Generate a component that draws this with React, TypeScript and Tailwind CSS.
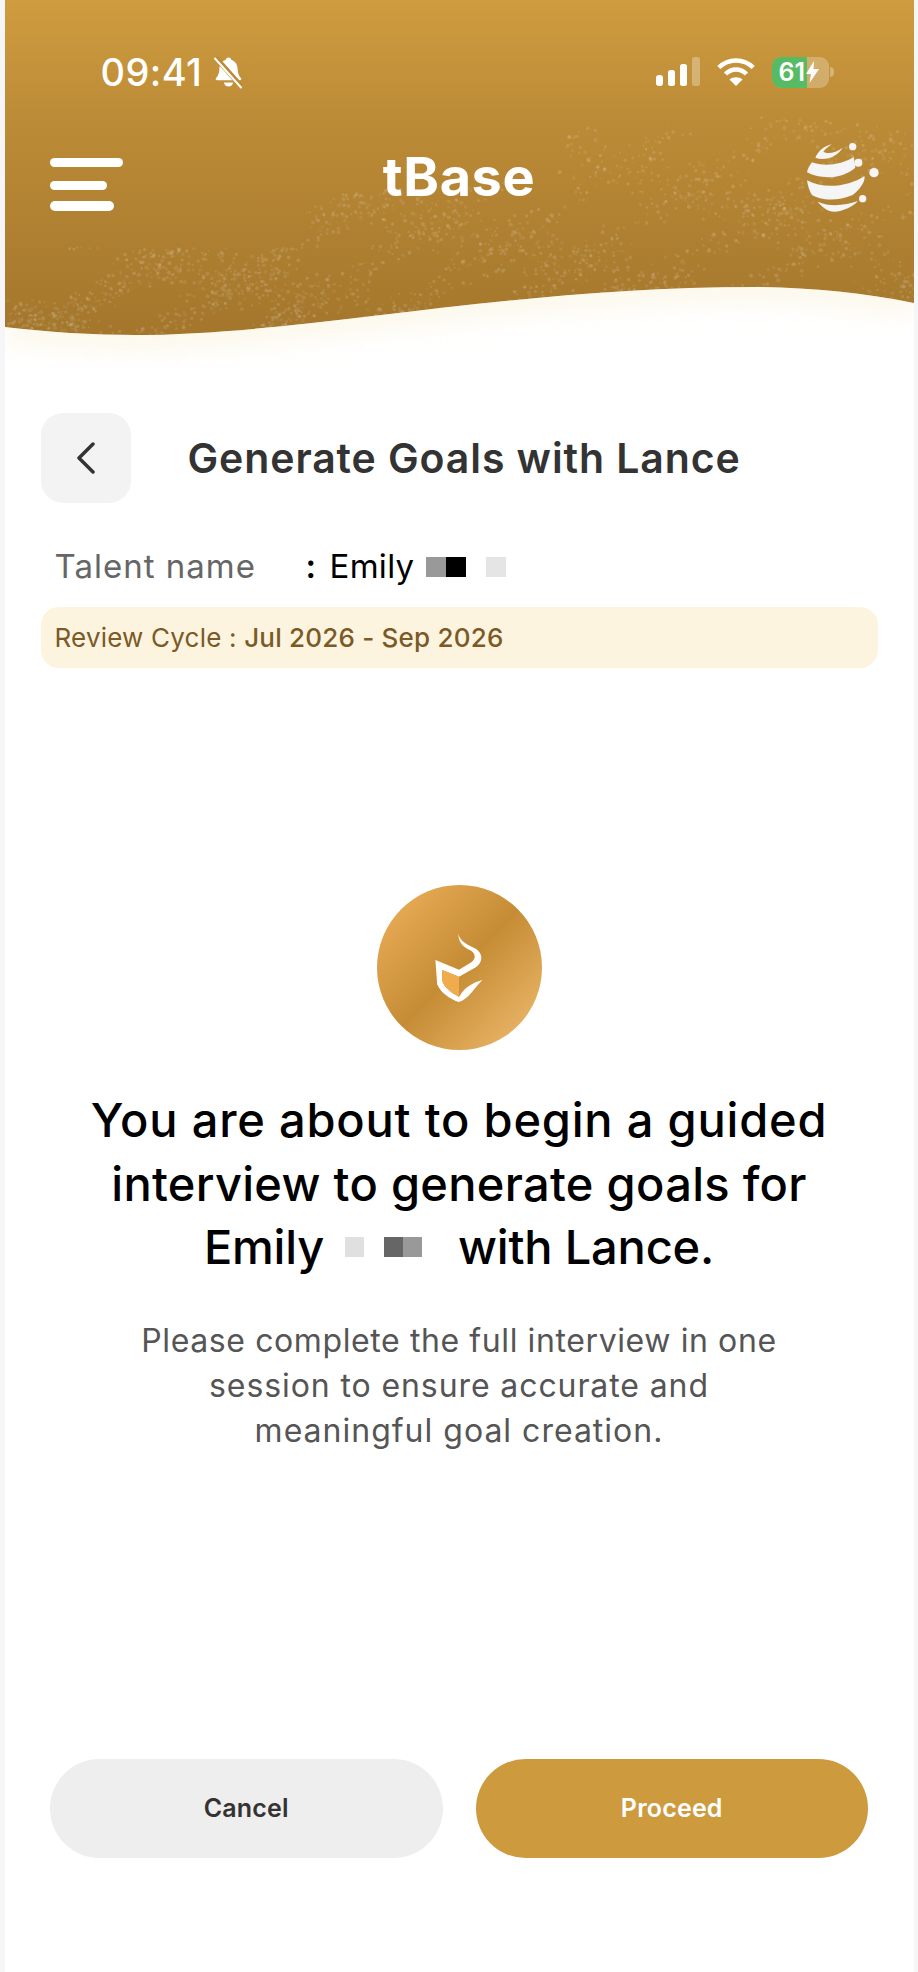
import { useMemo } from 'react'

const WAVE = 'M0 327 C40 332 90 335 130 335 C300 335 500 287 750 287 C800 287 860 293 909 303'

// wave height at a given x, sampled off the curve above
function waveY(x: number) {
  const pts = [[0, 327], [130, 335], [300, 328], [459, 313], [600, 296], [750, 287], [860, 293], [909, 303]]
  for (let i = 1; i < pts.length; i++) {
    if (x <= pts[i][0]) {
      const t = (x - pts[i - 1][0]) / (pts[i][0] - pts[i - 1][0])
      return pts[i - 1][1] + t * (pts[i][1] - pts[i - 1][1])
    }
  }
  return 303
}

function HeaderBackground() {
  const dots = useMemo(() => {
    let seed = 41
    const rand = () => {
      seed = (seed * 16807) % 2147483647
      return seed / 2147483647
    }
    const list: { x: number; y: number; r: number; o: number }[] = []
    for (let i = 0; i < 5000; i++) {
      const x = rand() * 909
      const spread = x < 300 ? 85 : x < 560 ? 130 : 170
      const d = Math.pow(rand(), 1.1) * spread
      const y = waveY(x) - d
      if (x < 60 && d > 30) continue
      // streaky clumps rather than even noise
      const clump = Math.sin(x / 47 + d / 18) + Math.sin(x / 19 - d / 11) + 1.1
      if (clump < rand() * 2.6) continue
      list.push({ x, y, r: 0.9 + rand() * 1.1, o: 0.05 + rand() * 0.1 })
    }
    return list
  }, [])

  return (
    <svg className="absolute inset-0 w-full h-full" viewBox="0 0 909 375" preserveAspectRatio="none">
      <defs>
        <clipPath id="below-wave">
          <path d={`${WAVE} L909 375 L0 375 Z`} />
        </clipPath>
        <filter id="soft" x="-10%" y="-100%" width="120%" height="300%">
          <feGaussianBlur stdDeviation="14" />
        </filter>
      </defs>
      {dots.map((d, i) => (
        <circle key={i} cx={d.x} cy={d.y} r={d.r} fill="#fff" opacity={d.o} />
      ))}
      <path d={`${WAVE} L909 375 L0 375 Z`} fill="#fff" />
      <g clipPath="url(#below-wave)">
        <path d={WAVE} fill="none" stroke="#f8edcf" strokeWidth="22" opacity="0.6" filter="url(#soft)" />
      </g>
    </svg>
  )
}

function BellSlash() {
  return (
    <svg width="31" height="33" viewBox="0 0 31 33" fill="none">
      <path d="M15.5 1.5c1.6 0 2.6 1 2.9 2.4 4 1.2 6 4.6 6.2 9 .1 3.6 1.1 6.3 3.4 9.4.7 1 .2 2-1 2H4c-1.200 0-1.700-1-1-2 2.300-3 3.300-5.800 3.400-9.400.2-4.400 2.200-7.800 6.200-9 .3-1.400 1.300-2.400 2.900-2.400z" fill="#fff" />
      <path d="M11 26.500h9c-.3 2.500-2.100 4-4.500 4s-4.200-1.500-4.500-4z" fill="#fff" />
      <path d="M3 2l25 28" stroke="#bb8b36" strokeWidth="5" />
      <path d="M2 2.500l26 29" stroke="#fff" strokeWidth="2" strokeLinecap="round" />
    </svg>
  )
}

function StatusBar() {
  return (
    <div className="relative flex items-center justify-between h-[32px] pl-[96px] pr-[80px]">
      <div className="flex items-center gap-[11px]">
        <span className="text-[38px] font-medium text-white tracking-[0.4px]">09:41</span>
        <BellSlash />
      </div>
      <div className="flex items-center">
        <svg width="46" height="30" viewBox="0 0 46 30">
          <rect x="0" y="18" width="7" height="11" rx="3" fill="#fff" />
          <rect x="12" y="13" width="7" height="16" rx="2.500" fill="#fff" />
          <rect x="24" y="7" width="7" height="22" rx="2.500" fill="#fff" />
          <rect x="36" y="0" width="8" height="29" rx="2.500" fill="#fff" opacity="0.3" />
        </svg>
        <svg className="ml-[15px]" width="38" height="30" viewBox="0 0 38 30" fill="none" stroke="#fff" strokeWidth="4.500">
          <path d="M1.800 10.500C11.500 1 26.500 1 36.200 10.500" />
          <path d="M8.500 17C14.500 11 23.500 11 29.500 17" />
          <path d="M19 29l-6.500-6.500C16 19.500 22 19.500 25.500 22.500z" fill="#fff" stroke="none" />
        </svg>
        <div className="ml-[17px] relative w-[57px] h-[31px] rounded-[9px] overflow-hidden bg-white/25 flex items-center pl-[7px] gap-[1px]">
          <div className="absolute inset-y-0 left-0 w-[35px] bg-[#56bb62]" />
          <span className="relative text-[25px] leading-none font-semibold text-white">61</span>
          <svg className="relative" width="13" height="22" viewBox="0 0 13 22">
            <path d="M8 0L0 13h5l-1.500 9L13 8H7.500z" fill="#fff" />
          </svg>
        </div>
        <div className="ml-[1px] w-[4px] h-[10px] rounded-r-full bg-white/30" />
      </div>
    </div>
  )
}

function GlobeLogo() {
  return (
    <svg width="74" height="72" viewBox="1040 425 222 212" fill="#f5f5f5">
      <path d="M1118 430C1095 435 1078 448 1068 470C1100 482 1135 465 1150 440C1130 455 1105 460 1092 452C1100 442 1108 436 1118 430Z" />
      <path d="M1058 484C1095 498 1150 490 1183 468L1188 500C1150 532 1090 538 1043 514C1045 504 1050 494 1058 484Z" />
      <path d="M1043 538C1095 566 1170 556 1215 525C1220 540 1200 568 1180 582C1130 604 1080 596 1058 582C1050 570 1045 553 1043 538Z" />
      <path d="M1075 602C1115 620 1160 612 1195 600C1185 615 1150 632 1125 632C1105 632 1088 618 1075 602Z" />
      <circle cx="1180" cy="437" r="11" />
      <circle cx="1197" cy="485" r="12" />
      <circle cx="1244" cy="515" r="14" />
      <circle cx="1210" cy="593" r="11" />
    </svg>
  )
}

function NavBar() {
  return (
    <div className="relative mt-[57px] grid grid-cols-[1fr_auto_1fr] items-center h-[72px] pl-[45px] pr-[34px]">
      <div className="flex flex-col w-[73px] mt-[7px]">
        <div className="w-[73px] h-[9px] rounded-full bg-white" />
        <div className="w-[57px] h-[9px] rounded-full bg-white mt-[14px]" />
        <div className="w-[64px] h-[10px] rounded-full bg-white mt-[11px]" />
      </div>
      <span className="text-[54px] leading-none font-bold text-white tracking-[0.6px] -mt-[9px] -ml-[11px]">tBase</span>
      <div className="flex justify-end -mt-[6px]">
        <GlobeLogo />
      </div>
    </div>
  )
}

function ShieldMark() {
  return (
    <svg width="50" height="70" viewBox="228 188 144 208">
      <path d="M298 190C302 212 325 222 350 235C372 250 372 275 350 290L300 318L250 298L250 325C250 345 275 365 300 378C320 345 345 335 370 328C345 350 330 385 300 393C275 385 245 365 235 340L230 268L300 297L338 274C350 264 350 250 335 240C318 232 298 220 298 190Z" fill="#fff" />
      <path d="M250 298L300 318V378C275 365 250 345 250 325Z" fill="#f0ac4c" />
    </svg>
  )
}

export default function App() {
  return (
    <div className="w-[918px] h-[1972px] bg-[#f6f6f8] px-[4.500px] font-['Inter','Liberation_Sans',sans-serif]">
      <div className="h-full bg-white flex flex-col">
        <div className="relative h-[375px] pt-[56px] bg-[linear-gradient(180deg,#cf9c3f_0%,#bd8c37_30%,#a3762c_90%)]">
          <HeaderBackground />
          <StatusBar />
          <NavBar />
        </div>

        <div className="px-[36px] mt-[38px]">
          <div className="flex items-center">
            <button type="button" className="w-[90px] h-[90px] rounded-[22px] bg-[#f3f3f3] flex items-center justify-center">
              <svg width="18" height="32" viewBox="0 0 18 32" fill="none" stroke="#333" strokeWidth="3.500" strokeLinecap="round" strokeLinejoin="round">
                <path d="M16 2L2 16l14 14" />
              </svg>
            </button>
            <h1 className="ml-[57px] mt-[2px] text-[41px] font-semibold text-[#333] tracking-[0.9px] whitespace-nowrap">Generate Goals with Lance</h1>
          </div>

          <div className="mt-[44px] pl-[14px] flex items-center h-[40px] text-[33px]">
            <span className="w-[251px] text-[#666] tracking-[1px]">Talent name</span>
            <span className="w-[24px] text-black font-semibold">:</span>
            <span className="text-black tracking-[0.3px]">Emily</span>
            <span className="ml-[12px] w-[20px] h-[20px] bg-[#999]" />
            <span className="w-[20px] h-[20px] bg-black" />
            <span className="ml-[20px] w-[20px] h-[20px] bg-[#e5e5e5]" />
          </div>

          <div className="mt-[20px] h-[61px] rounded-[18px] bg-[#fdf4e0] pl-[14px] flex items-center text-[26px] text-[#7a5a26] tracking-[0.2px]">
            <span>Review Cycle :&nbsp;</span>
            <span className="font-medium">Jul 2026 - Sep 2026</span>
          </div>
        </div>

        <div className="mt-[217px] flex flex-col items-center">
          <div className="w-[165px] h-[165px] rounded-full bg-[linear-gradient(135deg,#ecae5a_5%,#c68c35_50%,#ecb96c_95%)] flex items-center justify-center">
            <ShieldMark />
          </div>
          <h2 className="mt-[38px] text-[47px] leading-[63.500px] font-medium text-black text-center whitespace-nowrap">
            <span className="block tracking-[0.8px]">You are about to begin a guided</span>
            <span className="block tracking-[0.3px]">interview to generate goals for</span>
            <span className="flex items-center justify-center tracking-[-0.2px]">
              Emily
              <span className="ml-[21px] w-[19px] h-[20px] bg-[#e0e0e0]" />
              <span className="ml-[20px] w-[19px] h-[20px] bg-[#666]" />
              <span className="w-[19px] h-[20px] bg-[#999]" />
              <span className="ml-[36px]">with Lance.</span>
            </span>
          </h2>
          <p className="mt-[39px] text-[32px] leading-[45px] text-[#555] text-center">
            <span className="block tracking-[0.6px]">Please complete the full interview in one</span>
            <span className="block tracking-[0.9px]">session to ensure accurate and</span>
            <span className="block tracking-[1px]">meaningful goal creation.</span>
          </p>
        </div>

        <div className="mt-auto mb-[114px] px-[45.500px] flex gap-[33px]">
          <button type="button" className="flex-1 h-[99px] rounded-full bg-[#eeeeee] text-[25px] font-semibold text-[#333] tracking-[0.2px]">
            Cancel
          </button>
          <button type="button" className="flex-1 h-[99px] rounded-full bg-[#ce9a3e] text-[25px] font-semibold text-white tracking-[0.2px]">
            Proceed
          </button>
        </div>
      </div>
    </div>
  )
}
